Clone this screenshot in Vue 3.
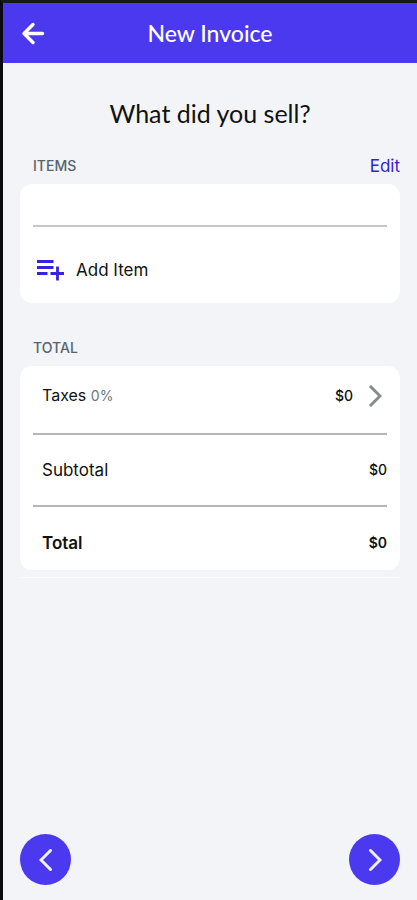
<script setup>
import { ref } from 'vue'

const item = ref('')
const rows = [
  { label: 'Subtotal', amount: '$0', strong: false },
  { label: 'Total', amount: '$0', strong: true }
]
</script>

<template>
  <div class="screen">
    <header class="bar">
      <button class="back" type="button" aria-label="Back">
        <svg width="24" height="24" viewBox="0 0 24 24" fill="none" stroke="currentColor" stroke-width="3.4" stroke-linecap="round" stroke-linejoin="round">
          <path d="M21.500 12.500H3M12 3.500L3 12.500l9 9" />
        </svg>
      </button>
      <h1 class="title">New Invoice</h1>
    </header>

    <main class="content">
      <h2 class="question">What did you sell?</h2>

      <section class="group items">
        <div class="caption">
          <h3 class="label">ITEMS</h3>
          <a class="edit" href="#">Edit</a>
        </div>
        <div class="card">
          <input v-model="item" class="entry" type="text" aria-label="Item" />
          <button class="add" type="button">
            <svg width="28" height="22" viewBox="0 0 28 22" fill="none" stroke="currentColor" stroke-width="2.8">
              <path d="M0 2.500h16.500M0 8.500h16.500M0 14.500h10.500M13.500 14.500h13.500M20.500 7.500v14" />
            </svg>
            <span>Add Item</span>
          </button>
        </div>
      </section>

      <section class="group totals">
        <div class="caption">
          <h3 class="label">TOTAL</h3>
        </div>
        <div class="card">
          <button class="row taxes" type="button">
            <span>Taxes <span class="rate">0%</span></span>
            <span class="value">
              <span class="amount">$0</span>
              <svg width="14" height="22" viewBox="0 0 14 22" fill="none" stroke="currentColor" stroke-width="3">
                <path d="M2 1l10 10L2 21" />
              </svg>
            </span>
          </button>
          <div v-for="row in rows" :key="row.label" class="row" :class="{ strong: row.strong }">
            <span>{{ row.label }}</span>
            <span class="amount">{{ row.amount }}</span>
          </div>
        </div>
      </section>
    </main>

    <nav class="steps">
      <button class="step" type="button" aria-label="Previous">
        <svg width="14" height="22" viewBox="0 0 14 22" fill="none" stroke="currentColor" stroke-width="3" stroke-linecap="round">
          <path d="M11.500 1.500L2 11l9.500 9.500" />
        </svg>
      </button>
      <button class="step" type="button" aria-label="Next">
        <svg width="14" height="22" viewBox="0 0 14 22" fill="none" stroke="currentColor" stroke-width="3" stroke-linecap="round">
          <path d="M2.500 1.500L12 11l-9.500 9.500" />
        </svg>
      </button>
    </nav>
  </div>
</template>

<style>
body {
  margin: 0;
}
</style>

<style scoped>
.screen {
  box-sizing: border-box;
  min-height: 100vh;
  display: flex;
  flex-direction: column;
  border-top: 3px solid #131a14;
  border-left: 3px solid #0b0b0d;
  background: #f2f4f8;
  color: #111;
  font-family: Inter, "Noto Sans", sans-serif;
  font-size: 17px;
  line-height: 24px;
}

button {
  padding: 0;
  border: 0;
  background: none;
  color: inherit;
  font: inherit;
  cursor: pointer;
}

svg {
  display: block;
  flex: none;
}

h1,
h2,
h3 {
  margin: 0;
  font-weight: 400;
}

.bar {
  display: grid;
  grid-template-columns: 24px 1fr 24px;
  align-items: center;
  height: 60px;
  padding: 0 18px;
  background: #4b39ef;
  color: #fff;
}

.title {
  font-family: Lato, sans-serif;
  font-size: 23px;
  font-weight: 500;
  line-height: 32px;
  text-align: center;
}

.content {
  padding: 0 17px;
}

.question {
  padding: 34px 0 24px;
  font-family: Lato, sans-serif;
  font-size: 25px;
  line-height: 32px;
  text-align: center;
}

.caption {
  display: flex;
  align-items: center;
  justify-content: space-between;
  padding-left: 13px;
  height: 26px;
}

.label {
  color: #57636c;
  font-size: 14px;
  font-weight: 500;
}

.edit {
  color: #2f1ed6;
  text-decoration: none;
}

.card {
  margin-top: 5px;
  padding: 0 13px;
  border-radius: 12px;
  background: #fff;
}

.totals {
  margin-top: 32px;
  padding-bottom: 7px;
  border-bottom: 1px solid #fafbfd;
}

.entry {
  box-sizing: border-box;
  display: block;
  width: 100%;
  height: 43px;
  padding: 8px;
  border: 0;
  border-bottom: 2px solid #c8c8c8;
  background: transparent;
  font: inherit;
  outline: none;
}

.add {
  display: flex;
  align-items: center;
  gap: 11px;
  width: 100%;
  height: 76px;
  padding: 10px 4px 0;
  box-sizing: border-box;
  text-align: left;
}

.add svg {
  color: #3524dc;
}

.row {
  box-sizing: border-box;
  display: flex;
  align-items: center;
  justify-content: space-between;
  width: 100%;
  height: 72px;
  padding-left: 9px;
  border-top: 2px solid #b4b6b8;
}

.row.taxes {
  height: 67px;
  padding: 0 5px 8px 9px;
  border-top: 0;
  font-size: 16px;
}

.row:last-child {
  height: 65px;
  padding-top: 8px;
}

.rate {
  color: #6d757b;
  font-size: 14px;
}

.value {
  display: flex;
  align-items: center;
  gap: 15px;
}

.value svg {
  color: #888c90;
}

.amount {
  font-size: 14px;
  font-weight: 500;
}

.strong,
.strong .amount {
  font-weight: 600;
}

.steps {
  display: flex;
  justify-content: space-between;
  margin-top: auto;
  padding: 24px 17px 15px;
}

.step {
  display: grid;
  place-items: center;
  width: 51px;
  height: 51px;
  border-radius: 50%;
  background: #4b39ef;
  color: #f0f0ff;
}
</style>
